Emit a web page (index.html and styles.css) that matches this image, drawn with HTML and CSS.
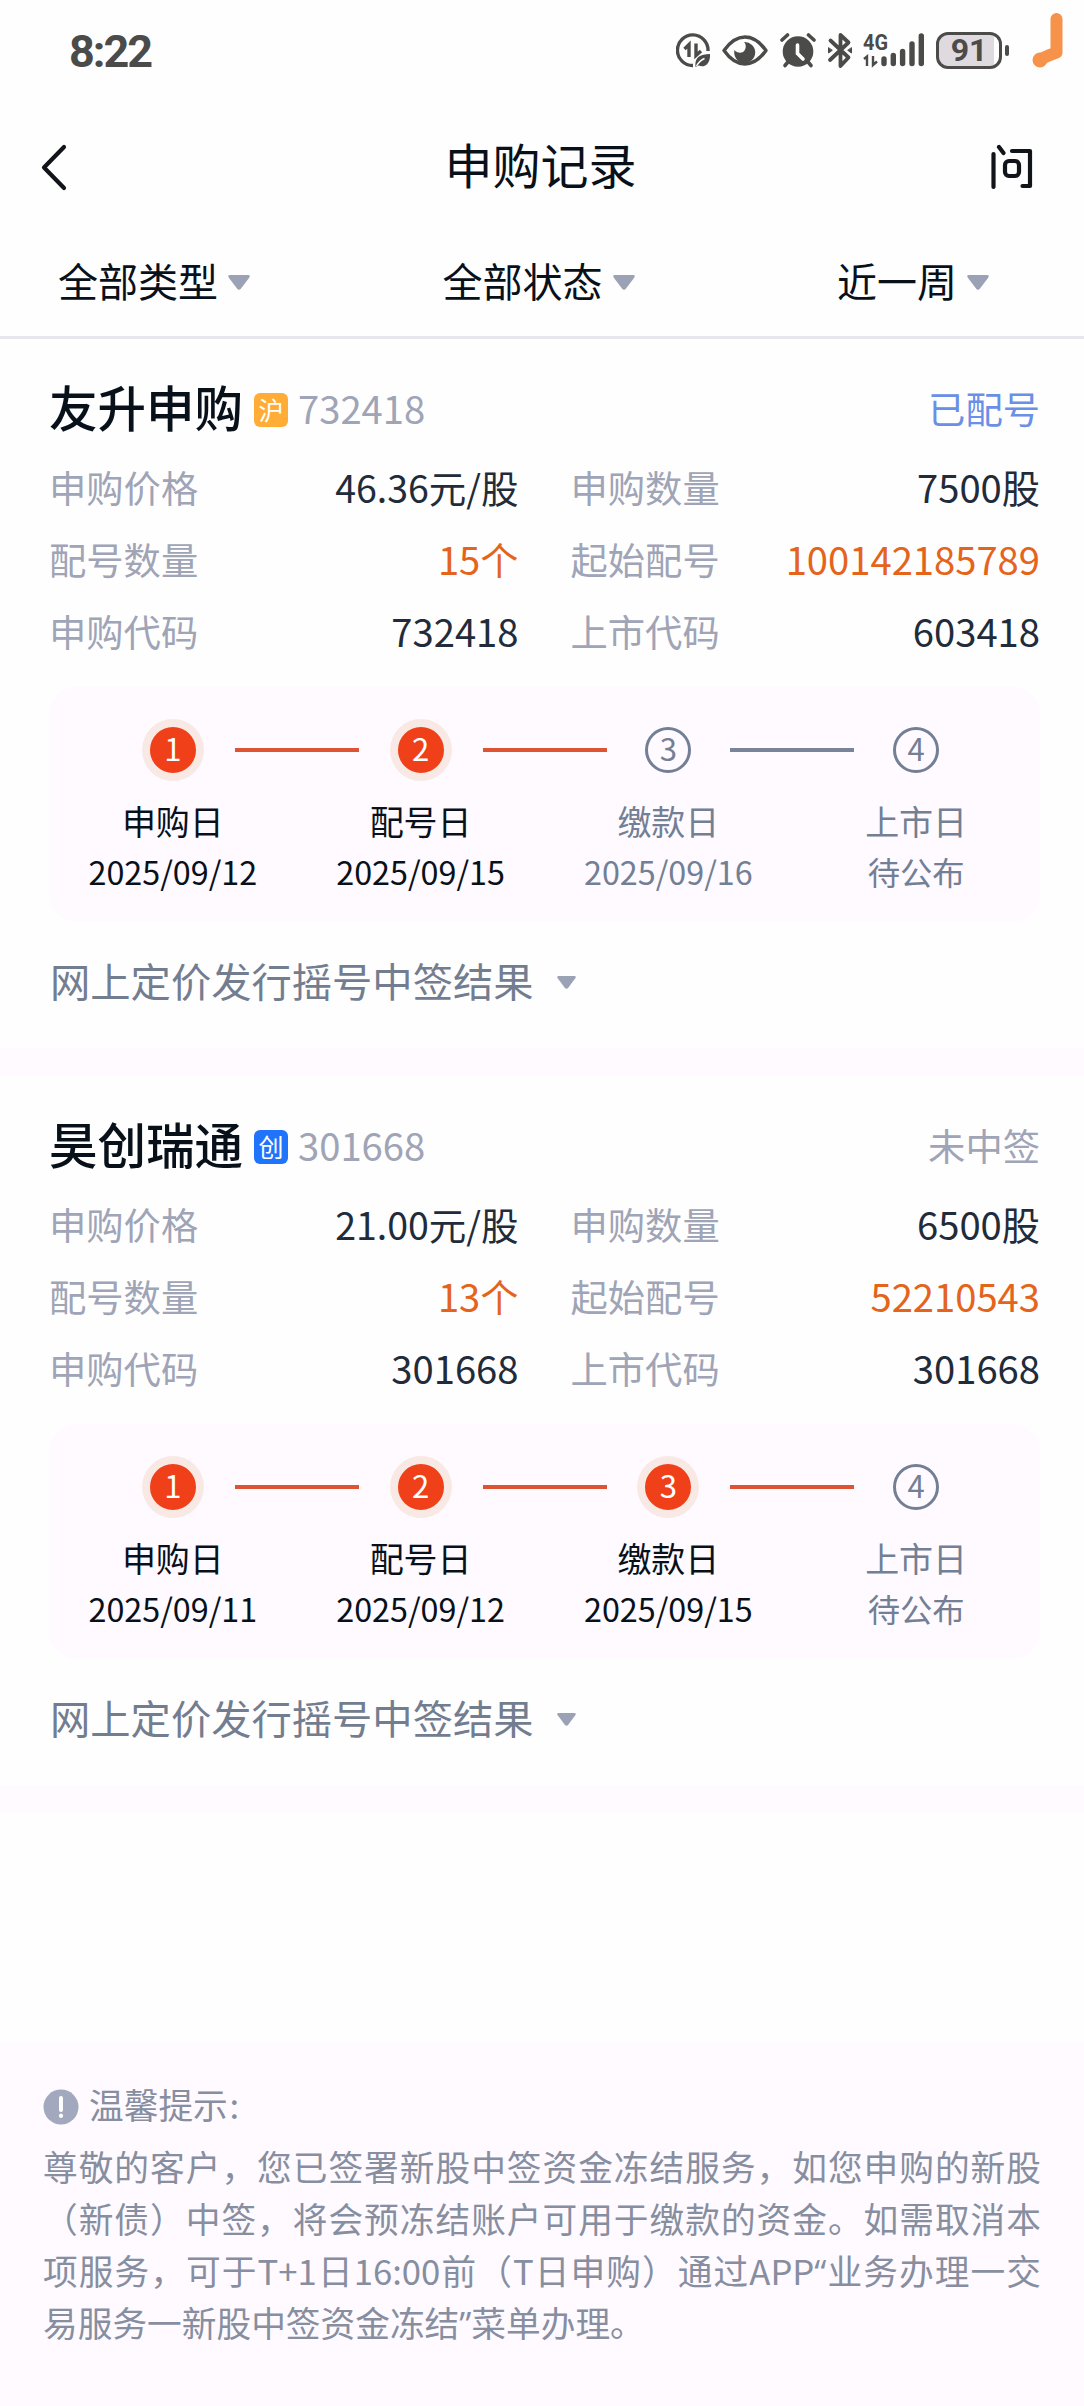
FILE: index.html
```html
<!DOCTYPE html>
<html lang="zh-CN">
    <head>
        <meta charset="utf-8" />
        <meta name="viewport" content="width=device-width, initial-scale=1" />
        <title>申购记录</title>
        <link rel="stylesheet" href="styles.css">
    </head>
    <body>
        <div class="statusbar">
            <span class="clock">8:22</span>
            <div class="status-icons">
                <!-- data saver -->
                <svg class="i-data" width="34" height="38" viewBox="0 0 34 38" fill="none" stroke="#4b4b49" stroke-width="3.400">
                    <path d="M32 20A15.300 15.300 0 1 0 17 34.500" />
                    <path d="M8.500 18l4.500-4.500V26M20 12.500V24.500l5-4.500" stroke-width="3.400" />
                    <path d="M19.500 36c-1-9 4-13 14.500-13C34.500 31 30 37.500 22.500 34.500z" fill="#4b4b49" stroke="none" />
                    <path d="M20.500 35c2-3.500 4.500-6 8-7.500" stroke="#fff" stroke-width="1.400" />
                </svg>
                <!-- eye comfort -->
                <svg class="i-eye" width="46" height="38" viewBox="0 0 46 38">
                    <path d="M2 19.500C8 11 15 6 23 6s15 5 21 13.500C38 28 31 33 23 33S8 28 2 19.500z" fill="none" stroke="#4b4b49" stroke-width="3.400" stroke-linejoin="round" />
                    <path d="M22 11a10.500 10.500 0 1 1-9.500 8c2.500 3.500 8 3.500 10 .5 2-3 1.500-6.500-.5-8.500z" fill="#4b4b49" />
                </svg>
                <!-- alarm -->
                <svg class="i-alarm" width="36" height="38" viewBox="0 0 36 38" stroke="#4b4b49" stroke-linecap="round" fill="none">
                    <circle cx="18" cy="20.500" r="15.300" fill="#4b4b49" stroke="none" />
                    <path d="M2 9l5.500-5M34 9l-5.500-5" stroke-width="3.600" />
                    <path d="M7.500 31.500L5 34.500M28.500 31.500l2.500 3" stroke-width="3.600" />
                    <path d="M17.500 14v8.500l5.500 5.500" stroke="#fff" stroke-width="3.600" />
                </svg>
                <!-- bluetooth -->
                <svg class="i-bt" width="26" height="38" viewBox="0 0 26 38" fill="none" stroke="#4b4b49" stroke-width="3.800" stroke-linejoin="round" stroke-linecap="round">
                    <path d="M3.500 9.500l18 17-8 8.500V4l8 7.500-18.500 17.500" />
                    <path d="M1.500 17v5l3.500-2.500zM24.500 17v5L21 19.500z" fill="#4b4b49" stroke-width="1" />
                </svg>
                <!-- mobile signal -->
                <svg class="i-signal" width="62" height="38" viewBox="0 0 62 38">
                    <text class="net" x="0" y="18.500" textLength="25" lengthAdjust="spacingAndGlyphs">4G</text>
                    <path d="M1 28l3-2.500v9.500M10 25v9l4-3.500" fill="none" stroke="#4b4b49" stroke-width="2.400" />
                    <path d="M21 28v4.500M30.300 24.500v8M39.600 20.500v12M49 13v19.500M58.300 5v27.500" fill="none" stroke="#4b4b49" stroke-width="5.400" stroke-linecap="round" />
                </svg>
                <div class="battery"><span>91</span></div>
                <i class="battery-nub"></i>
            </div>
            <svg class="hook" width="32" height="56" viewBox="0 0 32 56" fill="none" stroke="#f7924b" stroke-width="12" stroke-linecap="round" stroke-linejoin="round">
                <path d="M24.500 7v33.500q-9 3-17.500 7.500" />
                <circle cx="8" cy="48" r="1.500" />
            </svg>
        </div>

        <div class="navbar">
            <svg width="30" height="50" viewBox="0 0 30 50" fill="none" stroke="#111419" stroke-width="4.200" stroke-linecap="round" stroke-linejoin="round">
                <path d="M24 5L4 25.500 24 46" />
            </svg>
            <h1>申购记录</h1>
            <svg width="42" height="46" viewBox="0 0 42 46" fill="none" stroke="#111419" stroke-width="4.200" stroke-linecap="round" stroke-linejoin="round">
                <path d="M2.500 10v33M8 3l4.500 6M21 7h18v35h-7.500" />
                <rect x="14" y="17" width="14" height="15" rx="4" />
            </svg>
        </div>

        <div class="filters">
            <div class="filter"><span>全部类型</span><svg class="caret" viewBox="0 0 22 15"><path d="M2 0h18q3 0 1 3l-8 10.500q-2 2.500-4 0L1 3q-2-3 1-3z" /></svg></div>
            <div class="filter"><span>全部状态</span><svg class="caret" viewBox="0 0 22 15"><path d="M2 0h18q3 0 1 3l-8 10.500q-2 2.500-4 0L1 3q-2-3 1-3z" /></svg></div>
            <div class="filter"><span>近一周</span><svg class="caret" viewBox="0 0 22 15"><path d="M2 0h18q3 0 1 3l-8 10.500q-2 2.500-4 0L1 3q-2-3 1-3z" /></svg></div>
        </div>

        <div class="card">
            <div class="card-head">
                <h2>友升申购</h2>
                <span class="tag tag-sh">沪</span>
                <span class="code">732418</span>
                <span class="state state-blue">已配号</span>
            </div>
            <div class="info">
                <div class="row"><span>申购价格</span><b class="price">46.36元/股</b></div>
                <div class="row"><span>申购数量</span><b>7500股</b></div>
                <div class="row"><span>配号数量</span><b class="orange">15个</b></div>
                <div class="row"><span>起始配号</span><b class="orange">100142185789</b></div>
                <div class="row"><span>申购代码</span><b>732418</b></div>
                <div class="row"><span>上市代码</span><b>603418</b></div>
            </div>
            <div class="steps">
                <div class="step done"><div class="track"><i class="dot">1</i></div><p>申购日</p><time>2025/09/12</time></div>
                <div class="step done"><div class="track"><i class="dot">2</i></div><p>配号日</p><time>2025/09/15</time></div>
                <div class="step"><div class="track"><i class="dot">3</i></div><p>缴款日</p><time>2025/09/16</time></div>
                <div class="step"><div class="track"><i class="dot">4</i></div><p>上市日</p><time>待公布</time></div>
            </div>
            <div class="result"><span>网上定价发行摇号中签结果</span><svg class="caret" viewBox="0 0 22 15"><path d="M2 0h18q3 0 1 3l-8 10.500q-2 2.500-4 0L1 3q-2-3 1-3z" /></svg></div>
        </div>

        <div class="card">
            <div class="card-head">
                <h2>昊创瑞通</h2>
                <span class="tag tag-cy">创</span>
                <span class="code">301668</span>
                <span class="state">未中签</span>
            </div>
            <div class="info">
                <div class="row"><span>申购价格</span><b class="price">21.00元/股</b></div>
                <div class="row"><span>申购数量</span><b>6500股</b></div>
                <div class="row"><span>配号数量</span><b class="orange">13个</b></div>
                <div class="row"><span>起始配号</span><b class="orange">52210543</b></div>
                <div class="row"><span>申购代码</span><b>301668</b></div>
                <div class="row"><span>上市代码</span><b>301668</b></div>
            </div>
            <div class="steps">
                <div class="step done"><div class="track"><i class="dot">1</i></div><p>申购日</p><time>2025/09/11</time></div>
                <div class="step done"><div class="track"><i class="dot">2</i></div><p>配号日</p><time>2025/09/12</time></div>
                <div class="step done"><div class="track"><i class="dot">3</i></div><p>缴款日</p><time>2025/09/15</time></div>
                <div class="step"><div class="track"><i class="dot">4</i></div><p>上市日</p><time>待公布</time></div>
            </div>
            <div class="result"><span>网上定价发行摇号中签结果</span><svg class="caret" viewBox="0 0 22 15"><path d="M2 0h18q3 0 1 3l-8 10.500q-2 2.500-4 0L1 3q-2-3 1-3z" /></svg></div>
        </div>

        <div class="tips">
            <div class="tips-head">
                <svg width="36" height="36" viewBox="0 0 36 36">
                    <circle cx="18" cy="18" r="17.500" fill="#a2a8bd" />
                    <path d="M18 9v12M18 26.500v.5" stroke="#fff" stroke-width="4" stroke-linecap="round" />
                </svg>
                <span>温馨提示 :</span>
            </div>
            <p class="line">尊敬的客户，您已签署新股中签资金冻结服务，如您申购的新股</p>
            <p class="line">（新债）中签，将会预冻结账户可用于缴款的资金。如需取消本</p>
            <p class="line">项服务，可于T+1日16:00前（T日申购）通过APP<span class="latin">“</span>业务办理一交</p>
            <p class="line last">易服务一新股中签资金冻结<span class="latin">”</span>菜单办理。</p>
        </div>
    </body>
</html>
```
FILE: styles.css
```css
* {
    box-sizing: border-box;
}

body {
    margin: 0;
    width: 1084px;
    min-height: 2406px;
    display: flex;
    flex-direction: column;
    background: #fefefe;
    color: #08111a;
    font-family: "Noto Sans CJK SC", sans-serif;
}

h1, h2, p {
    margin: 0;
    font-weight: 400;
}

i, b {
    font-style: normal;
    font-weight: 400;
}

svg {
    display: block;
    flex: none;
}

/* status bar */
.statusbar {
    position: relative;
    height: 100px;
    padding: 0 75px 0 69px;
    display: flex;
    align-items: center;
    justify-content: space-between;
    color: #4b4b49;
}

.clock {
    font-family: Roboto, sans-serif;
    font-size: 45px;
    font-weight: 700;
    letter-spacing: -2px;
    padding-top: 3px;
}

.status-icons {
    display: flex;
    align-items: center;
}

.i-eye {
    margin-left: 12px;
}

.i-alarm {
    margin-left: 12px;
}

.i-bt {
    margin-left: 11px;
}

.i-signal {
    margin-left: 10px;
}

.net {
    font: 700 22px Roboto, sans-serif;
    fill: #4b4b49;
}

.battery {
    width: 66px;
    height: 37px;
    margin-left: 11px;
    padding: 2px;
    border: 3px solid #4b4b49;
    border-radius: 12px;
    background: linear-gradient(90deg, #dfdadf 91%, #fefefe 91%);
    background-clip: padding-box;
    font: 700 32px/27px Roboto, sans-serif;
    text-align: center;
}

.battery-nub {
    width: 4px;
    height: 11px;
    margin-left: 3px;
    border-radius: 2px;
    background: #4b4b49;
}

.hook {
    position: absolute;
    top: 12px;
    right: 20px;
}

.navbar {
    height: 134px;
    padding: 0 51px 0 40px;
    display: flex;
    align-items: center;
    justify-content: space-between;
}

.navbar h1 {
    font-size: 48px;
    line-height: 60px;
    padding: 0 0 9px 20px;
}

/* filters */
.filters {
    height: 105px;
    padding: 0 95px 6px 58px;
    display: flex;
    align-items: center;
    justify-content: space-between;
    border-bottom: 3px solid #e6e6ec;
}

.filter {
    display: flex;
    align-items: center;
    font-size: 40px;
    line-height: 50px;
}

.filter span {
    padding-bottom: 4px;
}

.filter:nth-child(2) {
    margin-right: 10px;
}

.caret {
    width: 22px;
    height: 15px;
    margin-left: 10px;
    fill: #9ca2b6;
}

/* records */
.card {
    height: 737px;
    padding: 39px 44px 0 49px;
    border-bottom: 28px solid #fefaff;
}

.card-head {
    height: 64px;
    display: flex;
    align-items: center;
}

.card-head h2 {
    font-size: 48.500px;
    font-weight: 500;
    line-height: 64px;
    padding-bottom: 9px;
}

.tag {
    width: 34px;
    height: 34px;
    margin: 0 10px 0 11px;
    border-radius: 6px;
    color: #fff;
    font-size: 25px;
    line-height: 33px;
    text-align: center;
}

.tag-sh {
    background: #ffad36;
}

.tag-cy {
    background: #1f74fb;
}

.code {
    padding-bottom: 6px;
    font-size: 38.200px;
    color: #9fa4b6;
}

.state {
    margin-left: auto;
    padding-bottom: 4px;
    font-size: 37.300px;
    color: #9fa4b6;
}

.state-blue {
    color: #6a8fe6;
}

.info {
    margin-top: 9px;
    display: grid;
    grid-template-columns: 1fr 1fr;
    column-gap: 52px;
}

.row {
    height: 72px;
    display: flex;
    align-items: center;
    justify-content: space-between;
    font-size: 37.300px;
    line-height: 72px;
}

.row span {
    color: #9fa4b6;
}

.row b {
    font-size: 38.200px;
    color: #222b3a;
}

.row .price {
    font-size: 37.500px;
}

.row .orange {
    color: #e4641c;
}

.steps {
    height: 235px;
    margin-top: 20px;
    padding-top: 31px;
    display: flex;
    border-radius: 28px;
    background: #fefaff;
}

.step {
    flex: 1;
    display: flex;
    flex-direction: column;
    align-items: center;
    color: #737f94;
}

.track {
    width: 100%;
    height: 64px;
    display: grid;
    grid-template-columns: 1fr 64px 1fr;
    align-items: center;
    justify-items: center;
}

/* each step draws its own half of the connector on both sides */
.track::before,
.track::after {
    content: "";
    width: 62px;
    height: 4px;
    background: #7a8498;
}

.track::before {
    justify-self: start;
}

.track::after {
    justify-self: end;
}

.done .track::before,
.done .track::after,
.done + .step .track::before {
    background: #dd5334;
}

.step:first-child .track::before,
.step:last-child .track::after {
    visibility: hidden;
}

.dot {
    width: 46px;
    height: 46px;
    border: 3px solid #737f94;
    border-radius: 50%;
    font-size: 31px;
    line-height: 36px;
    text-align: center;
}

.done {
    color: #08111a;
}

.done .dot {
    border-color: #ef4019;
    background: #ef4019;
    box-shadow: 0 0 0 8px #f9e9e4;
    color: #fff;
}

.step p {
    margin-top: 14px;
    font-size: 34px;
    line-height: 50px;
}

.step time {
    font-size: 32.300px;
    line-height: 51px;
}

.result {
    height: 120px;
    display: flex;
    align-items: center;
    padding-left: 1px;
    font-size: 40.300px;
    color: #737d90;
}

.result span {
    padding-bottom: 6px;
}

.result .caret {
    width: 19px;
    height: 13px;
    margin-left: 23px;
}

/* notice */
.tips {
    margin-top: auto;
    height: 364px;
    padding: 39px 43px 0;
    background: #fefaff;
    color: #868e9f;
    font-size: 34.700px;
    line-height: 52px;
}

.tips-head {
    height: 52px;
    margin-bottom: 7px;
    display: flex;
    align-items: center;
    word-spacing: -6px;
}

.tips-head span {
    padding-bottom: 6px;
}

.tips-head svg {
    margin-right: 10px;
}

.line {
    height: 52px;
    white-space: nowrap;
    text-align: justify;
    text-align-last: justify;
}

.line.last {
    text-align-last: left;
}

.latin {
    font-family: "Open Sans", sans-serif;
    line-height: 1;
}
```
